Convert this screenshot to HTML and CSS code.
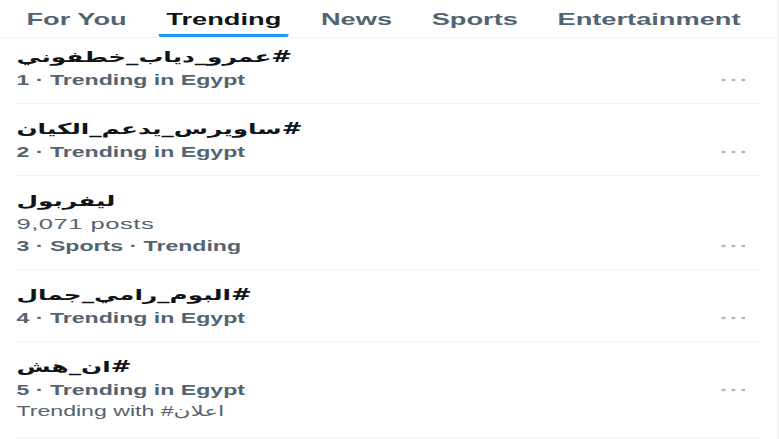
FILE: index.html
```html
<!DOCTYPE html>
<html lang="en">
<head>
    <meta charset="UTF-8">
    <meta name="viewport" content="width=device-width, initial-scale=1.0">
    <title>Explore - Trending</title>
    <link rel="stylesheet" href="styles.css">
</head>
<body>
    <div class="page">
        <nav class="tabs">
            <a class="tab"><span class="tab-label">For You</span></a>
            <a class="tab active"><span class="tab-label">Trending</span></a>
            <a class="tab"><span class="tab-label">News</span></a>
            <a class="tab"><span class="tab-label">Sports</span></a>
            <a class="tab"><span class="tab-label">Entertainment</span></a>
        </nav>

        <div class="trends" id="trendList"></div>
    </div>

    <script>
        const trends = [
            { name: '#عمرو_دياب_خطفوني', meta: '1 · Trending in Egypt' },
            { name: '#ساويرس_يدعم_الكيان', meta: '2 · Trending in Egypt' },
            { name: 'ليفربول', posts: '9,071 posts', meta: '3 · Sports · Trending' },
            { name: '#البوم_رامي_جمال', meta: '4 · Trending in Egypt' },
            { name: '#ان_هش', meta: '5 · Trending in Egypt', with: '#اعلان' }
        ];

        const list = document.getElementById('trendList');
        const dots = `
            <svg class="more" width="15" height="4" viewBox="0 0 15 4">
                <circle cx="1.5" cy="2" r="1.3"/>
                <circle cx="7.5" cy="2" r="1.3"/>
                <circle cx="13.5" cy="2" r="1.3"/>
            </svg>`;

        trends.forEach(trend => {
            const item = document.createElement('div');
            item.className = 'trend';
            item.innerHTML = `
                <div class="trend-name" dir="auto">${trend.name}</div>
                ${trend.posts ? `<div class="trend-posts">${trend.posts}</div>` : ''}
                <div class="trend-meta"><span>${trend.meta}</span>${dots}</div>
                ${trend.with ? `<div class="trend-with">Trending with ${trend.with}</div>` : ''}
            `;
            list.appendChild(item);
        });
    </script>
</body>
</html>
```

FILE: styles.css
```css
html, body {
    margin: 0;
    background: #fff;
    overflow: hidden;
}
body {
    font-family: "Liberation Sans", "DejaVu Sans", sans-serif;
    color: #0f1419;
}
/* the capture is stretched sideways, so the column is drawn narrow and widened */
.page {
    width: 471px;
    height: 439px;
    border-right: 1px solid #f3f4f5;
    transform: scaleX(1.65);
    transform-origin: 0 0;
}
.tabs {
    display: flex;
    gap: 24px;
    padding-left: 16px;
    border-bottom: 1px solid #eff3f4;
}
.tab {
    padding-top: 9px;
    font-size: 16.5px;
    font-weight: bold;
    color: #536471;
}
.tab-label {
    display: block;
    line-height: 20px;
    margin: 0 -5px;
    padding: 0 5px 5px;
    border-bottom: 3px solid transparent;
    border-radius: 2px;
}
.tab.active {
    color: #0f1419;
}
.tab.active .tab-label {
    border-bottom-color: #1d9bf0;
}
.trends {
    padding: 0 10px 0 9px;
}
.trend {
    padding: 14px 9px 12px 1px;
    border-bottom: 1px solid #eff3f4;
}
.trend:first-child {
    padding-top: 8px;
}
.trend-name {
    height: 23px;
    text-align: left;
    font-family: "DejaVu Sans", sans-serif;
    font-size: 15px;
    font-weight: bold;
    line-height: 23px;
}
.trend-posts {
    height: 22px;
    font-size: 15.5px;
    line-height: 22px;
    color: #536471;
    letter-spacing: 0.3px;
}
.trend-meta {
    display: flex;
    justify-content: space-between;
    align-items: center;
    height: 22px;
    font-size: 14px;
    font-weight: bold;
    color: #536471;
}
.more {
    fill: #aeb7be;
}
.trend-with {
    height: 21px;
    margin-bottom: 3px;
    font-size: 14px;
    line-height: 21px;
    color: #536471;
}
```
